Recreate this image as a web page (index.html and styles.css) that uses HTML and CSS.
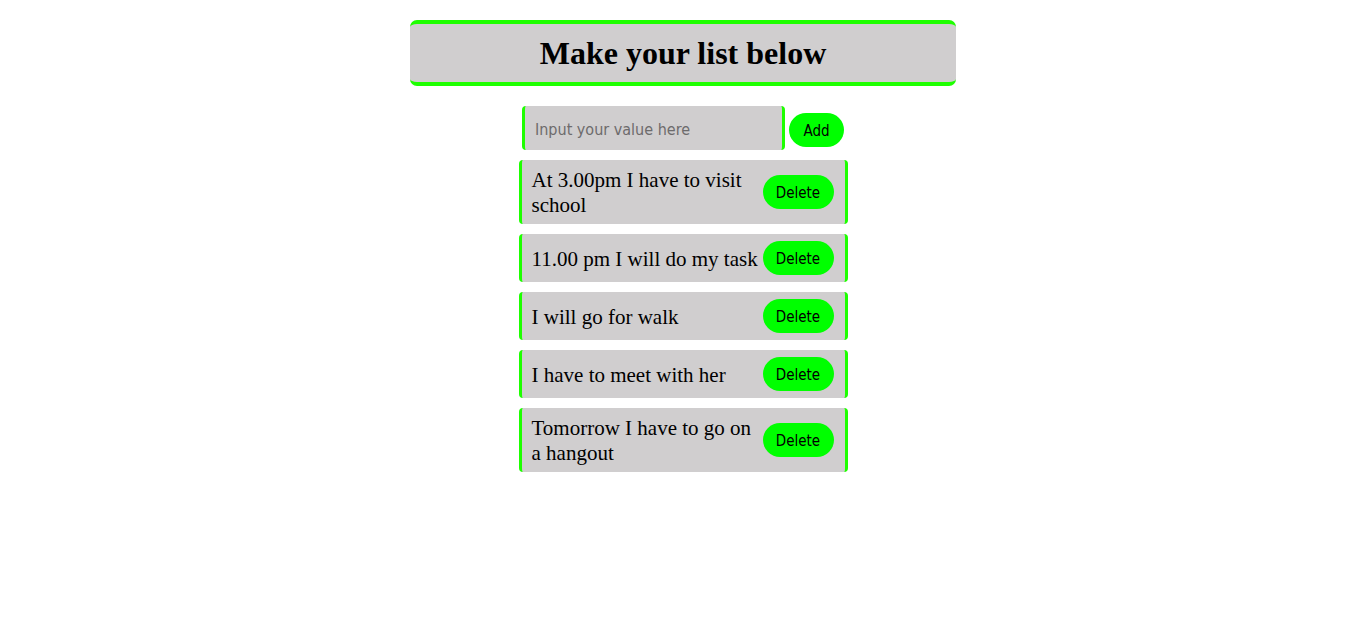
FILE: index.html
```html
<!DOCTYPE html>
<html>
<head>
<meta charset="utf-8">
<link rel="stylesheet" href="styles.css">
</head>
<body>
<div class="header"><h1>Make your list below</h1></div>
<div class="entry">
  <input class="field" type="text" placeholder="Input your value here">
  <button class="add">Add</button>
</div>
<div class="list">
  <div class="item"><span class="text">At 3.00pm I have to visit school</span><button class="del">Delete</button></div>
  <div class="item"><span class="text">11.00 pm I will do my task</span><button class="del">Delete</button></div>
  <div class="item"><span class="text">I will go for walk</span><button class="del">Delete</button></div>
  <div class="item"><span class="text">I have to meet with her</span><button class="del">Delete</button></div>
  <div class="item"><span class="text">Tomorrow I have to go on a hangout</span><button class="del">Delete</button></div>
</div>
</body>
</html>
```
FILE: styles.css
```css
html, body {
  margin: 0;
  background: #ffffff;
}
body {
  padding-top: 20px;
  font-family: "Liberation Serif", serif;
}
.header {
  width: 546px;
  margin: 0 auto;
  background: #d0cecf;
  border-top: 4px solid #1eff00;
  border-bottom: 4px solid #1eff00;
  border-radius: 7px;
  box-sizing: border-box;
  height: 66px;
  display: flex;
  align-items: center;
  justify-content: center;
}
.header h1 {
  margin: 0;
  font-size: 32px;
  font-weight: bold;
  color: #000;
  line-height: 37px;
}
.entry {
  display: flex;
  justify-content: center;
  align-items: flex-start;
  gap: 4px;
  margin-top: 20px;
}
.field {
  width: 263px;
  height: 44px;
  box-sizing: border-box;
  background: #d0cecf;
  border: none;
  border-left: 3px solid #1eff00;
  border-right: 3px solid #1eff00;
  border-radius: 4px;
  padding: 2px 10px 0;
  font-family: "DejaVu Sans Condensed", "DejaVu Sans", sans-serif;
  font-stretch: condensed;
  font-size: 16px;
  color: #000;
  outline: none;
}
.field::placeholder {
  color: #6d6b6c;
}
.add {
  margin-top: 7px;
  width: 55px;
  height: 34px;
  border: none;
  border-radius: 17px;
  background: #00ff00;
  font-family: "DejaVu Sans Condensed", "DejaVu Sans", sans-serif;
  font-stretch: condensed;
  font-size: 15px;
  color: #000;
  padding: 2px 0 0;
}
.list {
  width: 329px;
  margin: 10px auto 0;
  display: flex;
  flex-direction: column;
  gap: 10px;
}
.item {
  display: flex;
  align-items: center;
  box-sizing: border-box;
  width: 329px;
  background: #d0cecf;
  border-left: 3px solid #1eff00;
  border-right: 3px solid #1eff00;
  border-radius: 4px;
  padding: 7px 11px 7px 10px;
}
.text {
  flex: 1;
  font-size: 21px;
  line-height: 25px;
  padding-top: 1px;
  margin-bottom: -1px;
  color: #000;
}
.del {
  flex: 0 0 71px;
  width: 71px;
  height: 34px;
  border: none;
  border-radius: 17px;
  background: #00ff00;
  font-family: "DejaVu Sans Condensed", "DejaVu Sans", sans-serif;
  font-stretch: condensed;
  font-size: 15px;
  color: #000;
  padding: 1px 0 0;
}
```
